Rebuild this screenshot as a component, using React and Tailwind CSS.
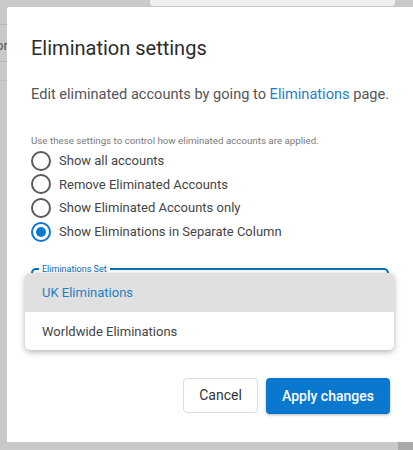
import { useState } from 'react';

const options = [
  'Show all accounts',
  'Remove Eliminated Accounts',
  'Show Eliminated Accounts only',
  'Show Eliminations in Separate Column',
];

const Radio = ({ checked }) => (
  <span
    className={`flex h-[20px] w-[20px] shrink-0 items-center justify-center rounded-full border-2 ${
      checked ? 'border-[#0a78cf]' : 'border-[#5a5a5a]'
    }`}
  >
    {checked && <span className="h-[10px] w-[10px] rounded-full bg-[#0a78cf]" />}
  </span>
);

const App = () => {
  const [selected, setSelected] = useState(3);

  return (
    <div
      className="relative h-[450px] w-[413px] overflow-hidden bg-[#c9c9c9]"
      style={{ fontFamily: 'Roboto, "Liberation Sans", sans-serif' }}
    >
      {/* page underneath the overlay */}
      <div className="absolute left-[150px] top-0 h-[6px] w-[245px] rounded-b-sm bg-[#f0f0f0]" />
      <div className="absolute left-0 top-[24px] h-px w-[7px] bg-[#b5b5b5]" />
      <div className="absolute left-[-4px] top-[36px] text-[13px] text-[#555]">or</div>
      <div className="absolute left-0 top-[61px] h-px w-[7px] bg-[#b5b5b5]" />
      <div className="absolute left-0 top-[80px] h-px w-[7px] bg-[#bdbdbd]" />
      <div className="absolute right-0 bottom-0 h-[8px] w-[15px] bg-[#a9a9a9]" />

      {/* dialog */}
      <div className="absolute left-[7px] top-[7px] flex h-[435px] w-[420px] flex-col rounded-tl-[3px] bg-white pl-[24px] pr-[31px] pt-[28px]">
        <h2 className="text-[20px] leading-[26px] text-[#2b2b2b]">Elimination settings</h2>

        <p className="mt-[23px] whitespace-nowrap text-[14.6px] leading-[20px] text-[#555]">
          Edit eliminated accounts by going to{' '}
          <span className="text-[#1f7fc3]">Eliminations</span> page.
        </p>

        <p className="mt-[31px] whitespace-nowrap text-[9.75px] leading-[12px] text-[#7a7a7a]">
          Use these settings to control how eliminated accounts are applied.
        </p>

        <div className="mt-[2px] flex flex-col">
          {options.map((label, i) => (
            <label
              key={label}
              onClick={() => setSelected(i)}
              className="flex h-[23.6px] cursor-pointer items-center gap-[8px] text-[13px] text-[#454545]"
            >
              <Radio checked={selected === i} />
              {label}
            </label>
          ))}
        </div>

        <div className="relative mt-[21px] h-[40px]">
          <fieldset className="h-[40px] w-[358px] rounded-[5px] border-2 border-[#0a6fb8] px-[6px]">
            <legend className="px-[3px] text-[9px] leading-[10px] text-[#0a6fb8]">Eliminations Set</legend>
          </fieldset>

          <div className="absolute left-[-6px] top-[9px] w-[369px] overflow-hidden rounded-[5px] bg-white shadow-[0_2px_6px_rgba(0,0,0,0.3)]">
            <div className="flex h-[39px] items-center bg-[#e0e0e0] px-[17px] text-[13px] text-[#1f7fc3]">
              UK Eliminations
            </div>
            <div className="flex h-[38px] items-center px-[17px] text-[13px] text-[#444]">
              Worldwide Eliminations
            </div>
          </div>
        </div>

        <div className="mt-[74px] flex justify-end gap-[8px] pr-[6px]">
          <button className="h-[35px] w-[75px] rounded-[4px] border border-[#dcdcdc] bg-white text-[14px] text-[#333]">
            Cancel
          </button>
          <button className="h-[36px] w-[124px] rounded-[4px] bg-[#0a78cf] text-[14px] font-medium text-white shadow-[0_1px_3px_rgba(0,0,0,0.3)]">
            Apply changes
          </button>
        </div>
      </div>
    </div>
  );
};

export default App;
